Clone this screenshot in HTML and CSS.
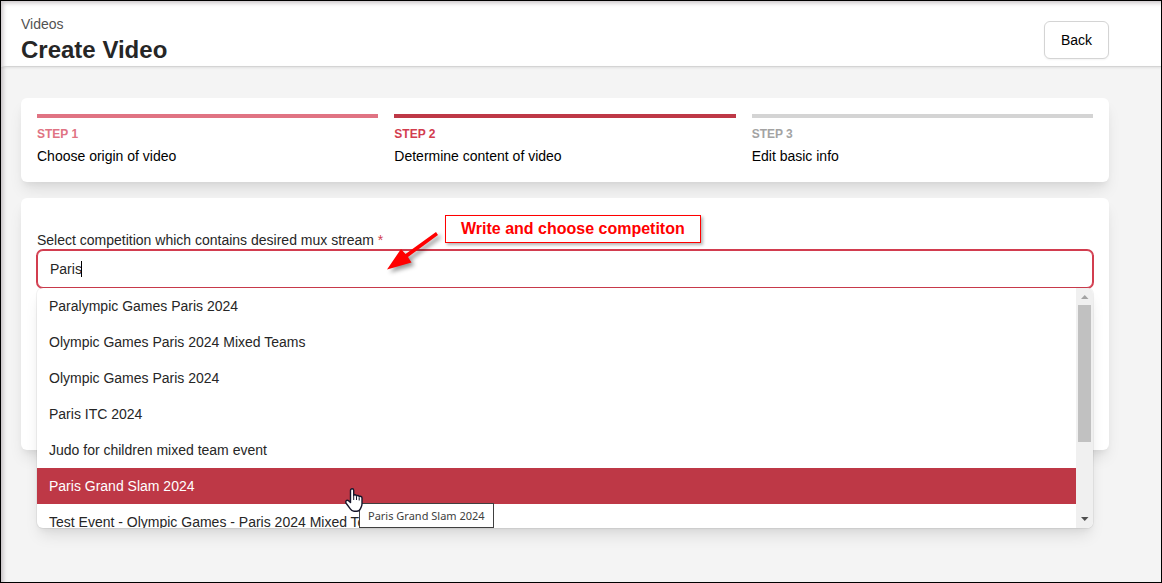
FILE: index.html
```
<!DOCTYPE html>
<html lang="en">
<head>
    <meta charset="UTF-8">
    <meta name="viewport" content="width=device-width, initial-scale=1.0">
    <title>Create Video</title>
    <link rel="stylesheet" href="styles.css">
</head>
<body>
    <header class="page-header">
        <div>
            <a class="breadcrumb" href="#">Videos</a>
            <h1>Create Video</h1>
        </div>
        <button type="button" class="btn-back">Back</button>
    </header>

    <main>
        <ol class="card steps">
            <li class="step done">
                <span class="step-number">STEP 1</span>
                <span class="step-name">Choose origin of video</span>
            </li>
            <li class="step current">
                <span class="step-number">STEP 2</span>
                <span class="step-name">Determine content of video</span>
            </li>
            <li class="step">
                <span class="step-number">STEP 3</span>
                <span class="step-name">Edit basic info</span>
            </li>
        </ol>

        <form class="card form-card">
            <label for="competition">Select competition which contains desired mux stream <span class="required">*</span></label>
            <div class="combobox">
                <input type="text" id="competition" name="competition" value="Paris" autocomplete="off" required>
                <span class="caret"></span>

                <div class="dropdown">
                    <ul class="options" role="listbox" aria-label="Competitions">
                        <li role="option">Paralympic Games Paris 2024</li>
                        <li role="option">Olympic Games Paris 2024 Mixed Teams</li>
                        <li role="option">Olympic Games Paris 2024</li>
                        <li role="option">Paris ITC 2024</li>
                        <li role="option">Judo for children mixed team event</li>
                        <li role="option" class="active" aria-selected="true">Paris Grand Slam 2024</li>
                        <li role="option">Test Event - Olympic Games - Paris 2024 Mixed Team</li>
                    </ul>
                    <div class="scrollbar">
                        <svg width="17" height="17" viewBox="0 0 17 17"><path d="M5 11h7.500L8.750 7z" fill="#a3a3a3"/></svg>
                        <div class="thumb"></div>
                        <svg class="down" width="17" height="17" viewBox="0 0 17 17"><path d="M5 6h7.500L8.750 10z" fill="#505050"/></svg>
                    </div>
                </div>

                <div class="tooltip">Paris Grand Slam 2024</div>
                <svg class="pointer" width="20" height="25" viewBox="0 0 20 25">
                    <path d="M5.500 2.500C5.500.2 8.700.2 8.700 2.500V7.500c.6-1.200 2.500-1 2.800.5.800-1 2.600-.6 2.700.7 1-.8 2.800-.2 2.800 1.300v6c0 2-.8 3-1.500 4.500-.7 1.700-1.700 2.800-3.700 2.800H9c-1.700 0-2.700-.9-3.700-2.400L1.300 15.500C0 13.500 1.500 11.500 3.500 12.700L5.500 14.500z" fill="#fff" stroke="#15152a" stroke-width="1.400" stroke-linejoin="round"/>
                    <path d="M8.700 7.500v4.500M11.500 8.500V12M14.200 9.500v3" fill="none" stroke="#15152a"/>
                </svg>
            </div>

            <div class="note">Write and choose competiton</div>
            <svg class="arrow" width="64" height="50" viewBox="0 0 64 50">
                <path d="M55 3 57 6 27 28 30.500 33.500 6 40.500 20 20 24.500 25z" fill="#f00"/>
            </svg>
        </form>
    </main>
</body>
</html>
```

FILE: styles.css
```
* {
    box-sizing: border-box;
}

body {
    margin: 0;
    min-height: 100vh;
    border: 1px solid #000;
    background-color: #f4f4f4;
    box-shadow: inset 3px 3px 4px -1px rgba(40, 20, 30, 0.25);
    font-family: "Liberation Sans", Arial, sans-serif;
    font-size: 14px;
    line-height: 20px;
    color: #000;
}

/* Header */
.page-header {
    display: flex;
    justify-content: space-between;
    align-items: center;
    padding: 13px 52px 0 20px;
    border-bottom: 1px solid #d4d4d4;
    background-color: #fff;
    box-shadow: inset 3px 3px 4px -1px rgba(40, 20, 30, 0.25), 0 1px 2px rgba(0, 0, 0, 0.08);
}

.breadcrumb {
    display: block;
    color: #525252;
    text-decoration: none;
}

h1 {
    margin: 0;
    font-size: 24px;
    line-height: 32px;
    color: #262626;
}

.btn-back {
    height: 38px;
    padding: 0 16px;
    border: 1px solid #d4d4d4;
    border-radius: 6px;
    background-color: #fff;
    box-shadow: 0 1px 2px rgba(0, 0, 0, 0.05);
    font: inherit;
    color: #000;
    cursor: pointer;
}

/* Cards */
main {
    display: grid;
    gap: 16px;
    padding: 31px 52px 0 20px;
}

.card {
    margin: 0;
    padding: 16px;
    border-radius: 6px;
    background-color: #fff;
    box-shadow: 0 10px 15px -3px rgba(0, 0, 0, 0.1), 0 4px 6px -2px rgba(0, 0, 0, 0.05);
}

/* Steps */
.steps {
    display: grid;
    grid-template-columns: repeat(3, 1fr);
    gap: 16px;
    list-style: none;
}

.step {
    display: flex;
    flex-direction: column;
    gap: 4px;
    padding-top: 8px;
    border-top: 4px solid #d4d4d4;
}

.step-number {
    font-size: 12px;
    font-weight: bold;
    line-height: 16px;
    color: #a3a3a3;
}

.step.done {
    border-color: #e07383;
}

.step.done .step-number {
    color: #e07383;
}

.step.current {
    border-color: #be3846;
}

.step.current .step-number {
    color: #d23d4f;
}

/* Form */
.form-card {
    position: relative;
    min-height: 252px;
    padding-top: 32px;
}

.form-card label {
    display: block;
    color: #262626;
}

.required {
    color: #d23d4f;
}

.combobox {
    position: relative;
}

.combobox input {
    display: block;
    width: 100%;
    height: 38px;
    padding: 0 12px;
    border: 1px solid #d23d4f;
    border-radius: 6px;
    outline: none;
    box-shadow: 0 0 0 1px #d23d4f;
    background-color: #fff;
    font: inherit;
    color: #262626;
}

.caret {
    position: absolute;
    top: 11px;
    left: 44px;
    width: 1px;
    height: 16px;
    background-color: #000;
}

/* Option list */
.dropdown {
    position: absolute;
    top: 100%;
    left: 0;
    right: 0;
    display: flex;
    height: 240px;
    border-radius: 6px;
    overflow: hidden;
    background-color: #fff;
    box-shadow: 0 0 0 1px rgba(0, 0, 0, 0.05), 0 10px 15px -3px rgba(0, 0, 0, 0.1), 0 4px 6px -2px rgba(0, 0, 0, 0.05);
}

.options {
    flex: 1;
    margin: 0;
    padding: 0;
    list-style: none;
    color: #262626;
}

.options li {
    padding: 8px 12px;
}

.options .active {
    background-color: #be3846;
    color: #fff;
}

.scrollbar {
    display: flex;
    flex-direction: column;
    width: 17px;
    background-color: #f0f0f0;
}

.thumb {
    height: 137px;
    margin: 0 2px;
    background-color: #c1c1c1;
}

.scrollbar .down {
    margin-top: auto;
}

.tooltip {
    position: absolute;
    top: 253px;
    left: 322px;
    padding: 2px 8px 1px;
    border: 1px solid #404040;
    background-color: #fff;
    font-family: "Noto Sans", sans-serif;
    font-size: 11px;
    color: #404040;
    white-space: nowrap;
}

.pointer {
    position: absolute;
    top: 238px;
    left: 308px;
}

/* Annotation */
.note {
    position: absolute;
    top: 17px;
    left: 424px;
    padding: 3px 15px;
    border: 1px solid #f00;
    background-color: #fff;
    box-shadow: 2px 2px 3px rgba(0, 0, 0, 0.3);
    font-size: 16px;
    font-weight: bold;
    color: #f00;
    white-space: nowrap;
}

.arrow {
    position: absolute;
    top: 31px;
    left: 360px;
    filter: drop-shadow(3px 3px 2px rgba(0, 0, 0, 0.4));
}
```
